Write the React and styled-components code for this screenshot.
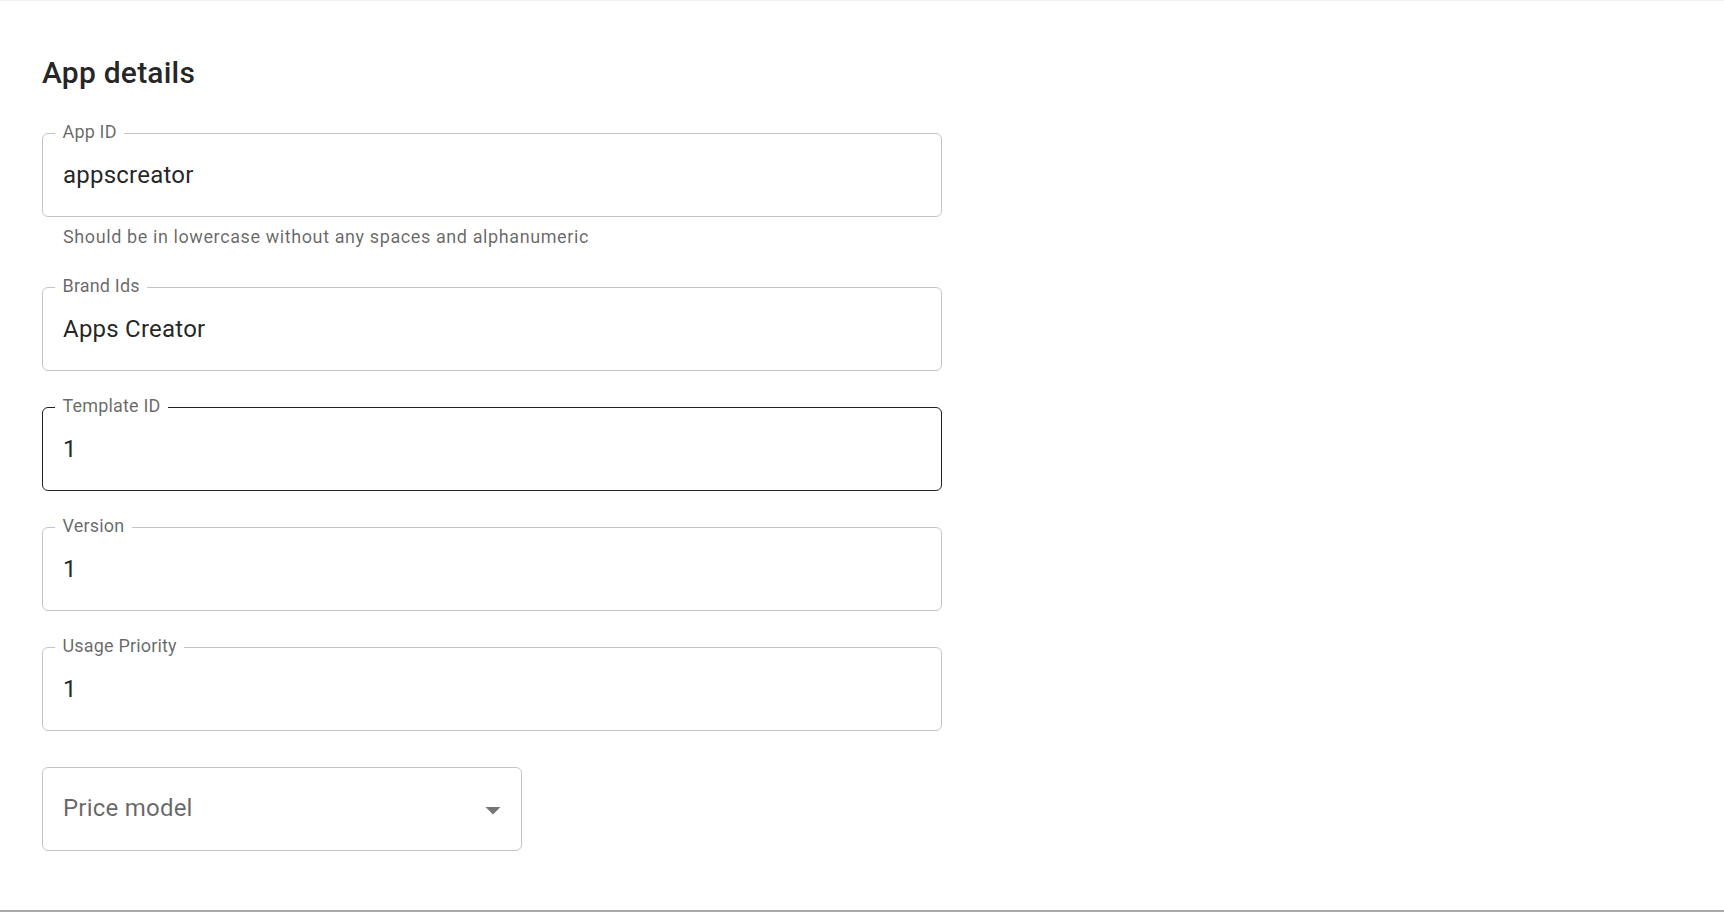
import styled, { createGlobalStyle } from "styled-components";

const GlobalStyle = createGlobalStyle`
  html, body {
    margin: 0;
    padding: 0;
    background: #ffffff;
    font-family: Roboto, "Liberation Sans", Arial, sans-serif;
  }
`;

const Page = styled.div`
  box-sizing: border-box;
  height: 912px;
  padding: 48px 42px 0 42px;
  border-top: 1px solid #f2f2f2;
  border-bottom: 2px solid #a9a9a9;
  box-shadow: 0 2px 0 #e2e2e2;
  background: #fff;
`;

const Title = styled.h6`
  margin: 0 0 36px 0;
  font-size: 30px;
  font-weight: 500;
  line-height: 48px;
  letter-spacing: 0.0075em;
  color: rgba(0, 0, 0, 0.87);
`;

const Form = styled.form`
  display: flex;
  flex-direction: column;
  gap: 36px;
  width: 900px;
`;

const FieldWrap = styled.div`
  display: flex;
  flex-direction: column;
  width: ${(p) => p.$width || "900px"};
`;

const Box = styled.div`
  position: relative;
  box-sizing: border-box;
  height: 84px;
  border: 1px solid
    ${(p) => (p.$hover ? "rgba(0, 0, 0, 0.87)" : "rgba(0, 0, 0, 0.23)")};
  border-radius: 6px;
  display: flex;
  align-items: center;
`;

// the floating label sits on top of the outline, like a notch
const Label = styled.label`
  position: absolute;
  top: -11px;
  left: 12px;
  padding: 0 7.5px;
  background: #fff;
  font-size: 18px;
  line-height: 18px;
  letter-spacing: 0.00938em;
  color: rgba(0, 0, 0, 0.6);
`;

const Input = styled.input`
  box-sizing: border-box;
  width: 100%;
  height: 100%;
  border: none;
  outline: none;
  background: transparent;
  padding: 0 21px 0 20px;
  margin-top: -1px;
  font-family: inherit;
  font-size: 24px;
  letter-spacing: 0.00938em;
  color: rgba(0, 0, 0, 0.87);
`;

const Helper = styled.p`
  margin: 4.5px 21px 0 21px;
  font-size: 18px;
  line-height: 1.66;
  letter-spacing: 0.03333em;
  color: rgba(0, 0, 0, 0.6);
`;

const SelectBox = styled(Box)`
  cursor: pointer;
  justify-content: space-between;
  padding: 0 10px 0 20px;
`;

const Placeholder = styled.span`
  margin-top: -2px;
  font-size: 24px;
  letter-spacing: 0.00938em;
  color: rgba(0, 0, 0, 0.6);
`;

const Arrow = styled.svg`
  width: 36px;
  height: 36px;
  margin-top: 1px;
  fill: rgba(0, 0, 0, 0.54);
`;

function TextField({ label, value, helper, hover }) {
  return (
    <FieldWrap>
      <Box $hover={hover}>
        <Label>{label}</Label>
        <Input defaultValue={value} />
      </Box>
      {helper && <Helper>{helper}</Helper>}
    </FieldWrap>
  );
}

function SelectField({ placeholder }) {
  return (
    <FieldWrap $width="480px">
      <SelectBox>
        <Placeholder>{placeholder}</Placeholder>
        <Arrow viewBox="0 0 24 24">
          <path d="M7 10l5 5 5-5z" />
        </Arrow>
      </SelectBox>
    </FieldWrap>
  );
}

export default function App() {
  return (
    <>
      <GlobalStyle />
      <Page>
        <Title>App details</Title>
        <Form onSubmit={(e) => e.preventDefault()}>
          <TextField
            label="App ID"
            value="appscreator"
            helper="Should be in lowercase without any spaces and alphanumeric"
          />
          <TextField label="Brand Ids" value="Apps Creator" />
          <TextField label="Template ID" value="1" hover />
          <TextField label="Version" value="1" />
          <TextField label="Usage Priority" value="1" />
          <SelectField placeholder="Price model" />
        </Form>
      </Page>
    </>
  );
}
